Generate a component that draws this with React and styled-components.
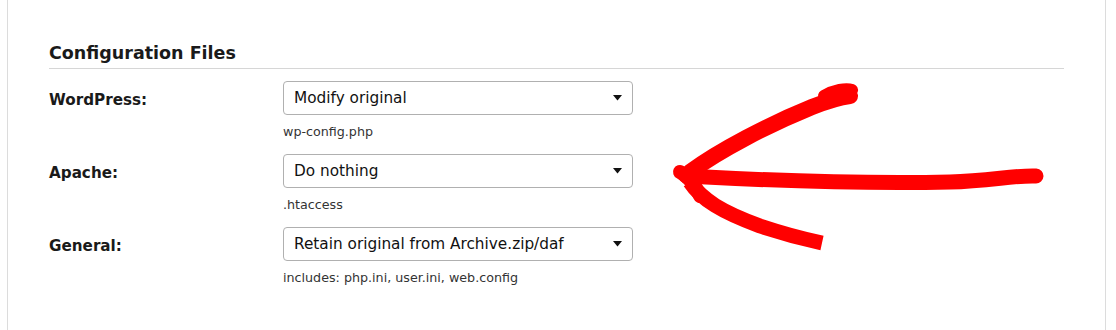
import React from "react";
import styled, { createGlobalStyle } from "styled-components";

const Global = createGlobalStyle`
  html, body { margin: 0; padding: 0; background: #fff; }
  body { font-family: "DejaVu Sans", Verdana, sans-serif; color: #1a1a1a; }
`;

const Page = styled.div`
  position: relative;
  width: 1116px;
  height: 330px;
  overflow: hidden;
  background: #fff;
`;

const Panel = styled.div`
  margin-left: 7px;
  width: 1099px;
  height: 330px;
  box-sizing: border-box;
  border-left: 1px solid #dcdcdc;
  border-right: 1px solid #dcdcdc;
  padding: 41px 41px 0 41px;
`;

const Title = styled.h2`
  margin: 0;
  font-size: 17.5px;
  font-weight: bold;
  line-height: 24px;
  color: #1a1a1a;
  padding-bottom: 3px;
  border-bottom: 1px solid #d6d6d6;
`;

const Rows = styled.div`
  display: flex;
  flex-direction: column;
  gap: 14px;
  margin-top: 12px;
`;

const Row = styled.div`
  display: grid;
  grid-template-columns: 234px 350px;
  align-items: start;
`;

const Label = styled.div`
  font-weight: bold;
  font-size: 15.2px;
  line-height: 20px;
  padding-top: 9px;
`;

const Field = styled.div`
  display: flex;
  flex-direction: column;
  gap: 9px;
`;

const SelectBox = styled.div`
  box-sizing: border-box;
  height: 34px;
  border: 1px solid #b0b0b0;
  border-radius: 4px;
  display: flex;
  align-items: center;
  justify-content: space-between;
  padding: 0 10px;
  font-size: 15.3px;
  color: #111;
  background: #fff;
`;

const Hint = styled.div`
  font-size: 12.7px;
  line-height: 16px;
  color: #333;
`;

const ArrowLayer = styled.svg`
  position: absolute;
  left: 0;
  top: 0;
  pointer-events: none;
`;

const Caret = () => (
  <svg width="9" height="6" viewBox="0 0 9 6">
    <polygon points="0,0 9,0 4.5,5.5" fill="#111" />
  </svg>
);

const rows = [
  { label: "WordPress:", value: "Modify original", hint: "wp-config.php" },
  { label: "Apache:", value: "Do nothing", hint: ".htaccess" },
  {
    label: "General:",
    value: "Retain original from Archive.zip/daf",
    hint: "includes: php.ini, user.ini, web.config",
  },
];

export default function App() {
  return (
    <Page>
      <Global />
      <Panel>
        <Title>Configuration Files</Title>
        <Rows>
          {rows.map((r) => (
            <Row key={r.label}>
              <Label>{r.label}</Label>
              <Field>
                <SelectBox>
                  <span>{r.value}</span>
                  <Caret />
                </SelectBox>
                <Hint>{r.hint}</Hint>
              </Field>
            </Row>
          ))}
        </Rows>
      </Panel>
      <ArrowLayer width="1116" height="330" viewBox="0 0 1116 330">
        <g fill="none" stroke="#ff0000" strokeLinejoin="round">
          <path d="M686 176 C 760 180, 860 184, 950 182 C 990 181, 1015 175, 1036 176" strokeWidth="15" strokeLinecap="round" />
          <path d="M690 172 C 720 150, 770 124, 812 107 C 830 100, 842 97, 850 96" strokeWidth="16" strokeLinecap="round" />
          <path d="M824 96 C 834 90, 846 88, 852 90" strokeWidth="12" strokeLinecap="round" />
          <path d="M690 182 C 702 200, 722 212, 760 226 C 790 236, 808 240, 822 243" strokeWidth="15" strokeLinecap="butt" />
          <path d="M680 172 C 688 176, 696 186, 700 196" strokeWidth="14" strokeLinecap="round" />
        </g>
      </ArrowLayer>
    </Page>
  );
}
